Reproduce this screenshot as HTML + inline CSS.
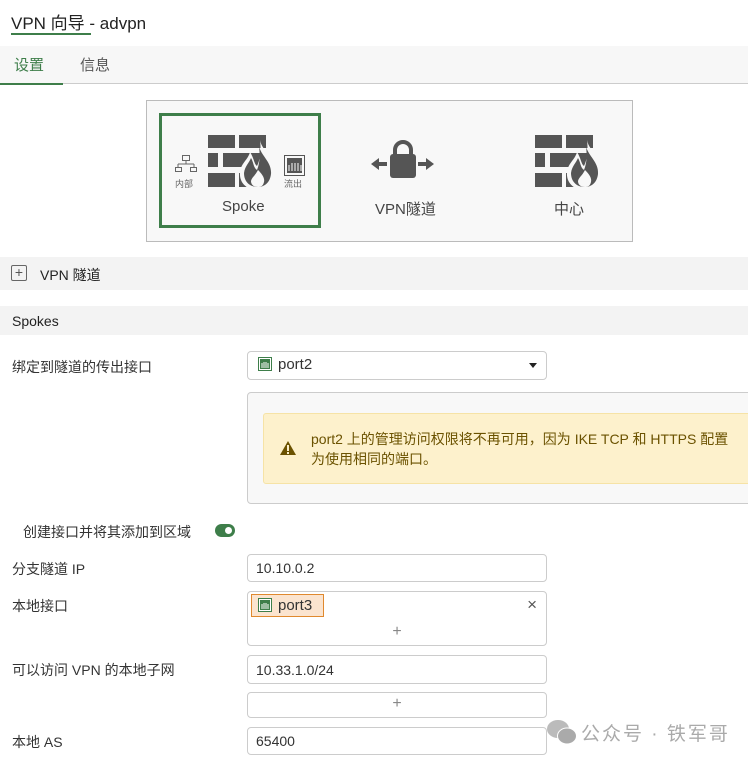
<!DOCTYPE html>
<html><head><meta charset="utf-8"><style>
*{margin:0;padding:0;box-sizing:border-box}
body{width:748px;height:762px;background:#fff;font-family:"Liberation Sans","Noto Sans CJK SC",sans-serif;color:#333;position:relative;overflow:hidden;font-size:14px}
.a{position:absolute}
.inp{position:absolute;left:247px;width:300px;border:1px solid #ccc;border-radius:4px;background:#fff}
.lbl{position:absolute;left:12px;font-size:14px;color:#333}
.plus{position:absolute;left:0;right:0;text-align:center;color:#888;font-size:16px}
</style></head><body>
<div class="a" style="left:11px;top:9px;font-size:17px;color:#222">VPN 向导 - advpn</div>
<div class="a" style="left:11px;top:33px;width:80px;height:2px;background:#3e7e4a"></div>
<div class="a" style="left:0;top:46px;width:748px;height:38px;background:#f7f7f7;border-bottom:1px solid #ccc"></div>
<div class="a" style="left:14px;top:54px;font-size:15px;color:#3e7e4a">设置</div>
<div class="a" style="left:80px;top:54px;font-size:15px;color:#555">信息</div>
<div class="a" style="left:0;top:83px;width:63px;height:2px;background:#3e7e4a"></div>

<div class="a" style="left:146px;top:100px;width:487px;height:142px;border:1px solid #bbb;background:#f8f8f8"></div>
<div class="a" style="left:159px;top:113px;width:162px;height:115px;border:3px solid #3e7e4a"></div>
<svg class="a" style="left:0;top:0" width="748" height="250">
<defs><g id="fw">
<rect x="0" y="1" width="27" height="13" fill="#555"/><rect x="31" y="1" width="27" height="13" fill="#555"/>
<rect x="0" y="19" width="10" height="14" fill="#555"/><rect x="15" y="19" width="39" height="14" fill="#555"/>
<rect x="0" y="39" width="27" height="14" fill="#555"/><rect x="31" y="39" width="12" height="14" fill="#555"/>
<path d="M52 6 C54 18 70 26 68 40 C67 51 58 56 50 56 C39 56 31 49 32 38 C33 29 40 26 42 18 C46 24 46 30 49 32 C53 24 53 14 52 6Z" fill="#f8f8f8"/>
<path d="M51 12 C53 22 64 28 63 40 C62 49 56 53 50 53 C42 53 36 48 36 39 C37 32 41 29 43 24 C46 29 45 33 49 36 C52 29 52 20 51 12Z" fill="#555"/>
<path d="M50 36 C54 40 57 44 56 48 C55 52 53 53 50 53 C45 53 43 50 43 47 C44 43 47 42 50 36Z" fill="#f8f8f8"/>
</g></defs>
<use href="#fw" x="208" y="134"/>
<use href="#fw" x="535" y="134"/>
<g fill="none" stroke="#666" stroke-width="1"><rect x="182.5" y="155.5" width="7" height="5"/><path d="M186 161v3M178 164h16M178 164v3M194 164v3"/><rect x="175.5" y="167.5" width="6" height="4"/><rect x="190.5" y="167.5" width="6" height="4"/></g>
<text x="175" y="187" font-size="9" fill="#666" font-family="Noto Sans CJK SC">内部</text>
<rect x="284.5" y="155.5" width="20" height="20" fill="none" stroke="#555"/>
<rect x="287" y="158" width="15" height="15" fill="#555"/>
<g stroke="#fff"><path d="M289 165v6M292 163v8M295 163v8M298 163v8M301 165v6"/></g>
<text x="284" y="187" font-size="9" fill="#666" font-family="Noto Sans CJK SC">流出</text>
<path d="M371 164l8-6v12z M434 164l-8-6v12z" fill="#555"/><rect x="378" y="162" width="9" height="4" fill="#555"/><rect x="418" y="162" width="9" height="4" fill="#555"/>
<path d="M395 155v-5a8 8 0 0 1 16 0v5" fill="none" stroke="#555" stroke-width="4"/>
<rect x="390" y="154" width="26" height="24" rx="3" fill="#555"/>
</svg>
<div class="a" style="left:222px;top:198px;font-size:15px;color:#444">Spoke</div>
<div class="a" style="left:375px;top:198px;font-size:15px;color:#444">VPN隧道</div>
<div class="a" style="left:554px;top:198px;font-size:15px;color:#444">中心</div>

<div class="a" style="left:0;top:257px;width:748px;height:33px;background:#f3f3f3"></div>
<div class="a" style="left:11px;top:265px;width:16px;height:16px;border:1px solid #666;border-radius:2px;text-align:center;line-height:13px;font-size:14px;color:#555">+</div>
<div class="a" style="left:40px;top:265px;font-size:14px;color:#222">VPN 隧道</div>
<div class="a" style="left:0;top:306px;width:748px;height:29px;background:#f3f3f3"></div>
<div class="a" style="left:12px;top:313px;font-size:14px;color:#222">Spokes</div>

<div class="lbl" style="top:357px">绑定到隧道的传出接口</div>
<div class="inp" style="top:351px;height:29px"></div>
<svg class="a" style="left:258px;top:357px" width="14" height="14"><rect x=".5" y=".5" width="13" height="13" fill="#fff" stroke="#3e7e4a"/><rect x="2" y="2" width="10" height="10" fill="#3e7e4a"/><path d="M4 6v5M6 5v6M8 5v6M10 6v5" stroke="#fff"/></svg>
<div class="a" style="left:278px;top:356px;font-size:15px;color:#333">port2</div>
<div class="a" style="left:529px;top:363px;border-left:4px solid transparent;border-right:4px solid transparent;border-top:5px solid #222"></div>

<div class="a" style="left:247px;top:392px;width:510px;height:112px;border:1px solid #ccc;border-radius:4px;background:#f8f8f8"></div>
<div class="a" style="left:263px;top:413px;width:490px;height:71px;border:1px solid #f6e3a6;border-radius:3px;background:#fdf1cc"></div>
<svg class="a" style="left:280px;top:441px" width="16" height="14"><path d="M8 0L16 14H0z" fill="#6b5200"/><rect x="7" y="4" width="2" height="6" fill="#fdf1cc"/><rect x="7" y="11" width="2" height="2" fill="#fdf1cc"/></svg>
<div class="a" style="left:311px;top:429px;font-size:14px;line-height:20px;color:#6b5200;width:420px">port2 上的管理访问权限将不再可用，因为 IKE TCP 和 HTTPS 配置为使用相同的端口。</div>

<div class="lbl" style="left:23px;top:522px">创建接口并将其添加到区域</div>
<div class="a" style="left:215px;top:524px;width:20px;height:13px;border-radius:7px;background:#3e7e4a"></div>
<div class="a" style="left:225px;top:527px;width:7px;height:7px;border-radius:50%;background:#fff"></div>

<div class="lbl" style="top:559px">分支隧道 IP</div>
<div class="inp" style="top:554px;height:28px"><span class="a" style="left:8px;top:5px;font-size:14px">10.10.0.2</span></div>
<div class="lbl" style="top:596px">本地接口</div>
<div class="inp" style="top:591px;height:55px"><span class="plus" style="top:31px">+</span><span class="a" style="right:9px;top:3px;font-size:17px;color:#555">×</span></div>
<div class="a" style="left:251px;top:594px;width:73px;height:23px;border:1px solid #e0892e;background:#fbe4cf"></div>
<svg class="a" style="left:258px;top:598px" width="14" height="14"><rect x=".5" y=".5" width="13" height="13" fill="#fff" stroke="#3e7e4a"/><rect x="2" y="2" width="10" height="10" fill="#3e7e4a"/><path d="M4 6v5M6 5v6M8 5v6M10 6v5" stroke="#fff"/></svg>
<div class="a" style="left:278px;top:597px;font-size:15px;color:#333">port3</div>
<div class="lbl" style="top:660px">可以访问 VPN 的本地子网</div>
<div class="inp" style="top:655px;height:29px"><span class="a" style="left:8px;top:6px;font-size:14px">10.33.1.0/24</span></div>
<div class="inp" style="top:692px;height:26px"><span class="plus" style="top:2px">+</span></div>
<div class="lbl" style="top:732px">本地 AS</div>
<div class="inp" style="top:727px;height:28px"><span class="a" style="left:8px;top:5px;font-size:14px">65400</span></div>

<svg class="a" style="left:547px;top:719px" width="30" height="26"><ellipse cx="11" cy="10" rx="11" ry="9" fill="#bbb"/><ellipse cx="20" cy="17" rx="9.5" ry="8" fill="#aaa" stroke="#fff"/></svg>
<div class="a" style="left:581px;top:719px;font-size:19px;color:#aaa;letter-spacing:2px;white-space:nowrap">公众号 · 铁军哥</div>
</body></html>
